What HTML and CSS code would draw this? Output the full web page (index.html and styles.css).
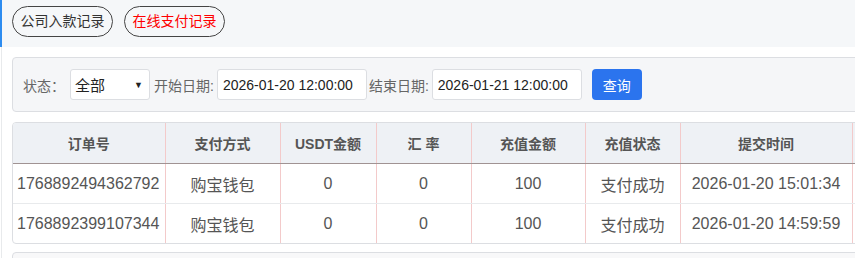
FILE: index.html
```html
<!DOCTYPE html>
<html lang="zh-CN">

<head>
    <meta charset="UTF-8">
    <meta name="viewport" content="width=device-width, initial-scale=1.0">
    <title>在线支付记录</title>
    <link rel="stylesheet" href="styles.css">
</head>

<body>
    <div class="tabbar">
        <a class="tab">公司入款记录</a>
        <a class="tab active">在线支付记录</a>
    </div>

    <div class="main">
        <!-- Search form -->
        <div class="search">
            <label class="lbl first">状态：</label>
            <div class="select"><span>全部</span><span class="arrow">&#9660;</span></div>
            <label class="lbl">开始日期:</label>
            <input class="date" type="text" value="2026-01-20 12:00:00">
            <label class="lbl">结束日期:</label>
            <input class="date" type="text" value="2026-01-21 12:00:00">
            <button class="btn">查询</button>
        </div>

        <!-- Records table -->
        <div class="grid">
            <table>
                <colgroup>
                    <col style="width:152px">
                    <col style="width:115px">
                    <col style="width:96px">
                    <col style="width:95px">
                    <col style="width:114px">
                    <col style="width:95px">
                    <col style="width:172px">
                    <col style="width:120px">
                </colgroup>
                <thead>
                    <tr>
                        <th>订单号</th>
                        <th>支付方式</th>
                        <th>USDT金额</th>
                        <th>汇 率</th>
                        <th>充值金额</th>
                        <th>充值状态</th>
                        <th>提交时间</th>
                        <th></th>
                    </tr>
                </thead>
                <tbody>
                    <tr>
                        <td>1768892494362792</td>
                        <td>购宝钱包</td>
                        <td>0</td>
                        <td>0</td>
                        <td>100</td>
                        <td>支付成功</td>
                        <td>2026-01-20 15:01:34</td>
                        <td></td>
                    </tr>
                    <tr>
                        <td>1768892399107344</td>
                        <td>购宝钱包</td>
                        <td>0</td>
                        <td>0</td>
                        <td>100</td>
                        <td>支付成功</td>
                        <td>2026-01-20 14:59:59</td>
                        <td></td>
                    </tr>
                </tbody>
            </table>
        </div>

        <div class="pager"></div>
    </div>
</body>

</html>
```

FILE: styles.css
```css
body {
    margin: 0;
    padding: 0;
    background-color: #ffffff;
    font-family: 'Liberation Sans', 'Noto Sans CJK SC', sans-serif;
    font-size: 14px;
    color: #555;
    overflow: hidden;
}

/* Top tabs */
.tabbar {
    height: 47px;
    box-sizing: border-box;
    background-color: #f5f7f9;
    border-left: 2px solid #2d8cf0;
    padding: 6px 0 0 10px;
    display: flex;
    gap: 11px;
}

.tab {
    display: block;
    width: 101px;
    height: 31px;
    box-sizing: border-box;
    border: 1px solid #444;
    border-radius: 16px;
    line-height: 29px;
    text-align: center;
    font-size: 14px;
    color: #333;
}

.tab.active {
    color: #ff0000;
}

.main {
    margin-left: 1px;
    border-left: 1px solid #e8eaec;
    padding: 10px 0 0 10px;
    width: 1100px;
}

/* Search form */
.search {
    display: flex;
    align-items: center;
    height: 55px;
    box-sizing: border-box;
    padding-left: 10px;
    background-color: #f5f6f8;
    border: 1px solid #dcdee2;
    border-radius: 4px;
}

.lbl {
    color: #666;
    font-size: 14px;
    margin-right: 3px;
}

.lbl.first {
    margin-right: 5px;
}

.select {
    width: 80px;
    height: 31px;
    box-sizing: border-box;
    background: #fff;
    border: 1px solid #dcdee2;
    border-radius: 3px;
    display: flex;
    align-items: center;
    justify-content: space-between;
    padding: 0 6px 0 4px;
    color: #222;
    font-size: 15px;
    margin-right: 4px;
}

.select .arrow {
    font-size: 9px;
    color: #222;
}

.date {
    width: 150px;
    height: 31px;
    box-sizing: border-box;
    border: 1px solid #dcdee2;
    border-radius: 3px;
    padding: 0 0 0 5px;
    font-family: 'Liberation Sans', sans-serif;
    font-size: 14px;
    color: #222;
    margin-right: 2px;
}

.btn {
    width: 50px;
    height: 31px;
    margin-left: 8px;
    border: none;
    border-radius: 4px;
    background-color: #2b74ee;
    color: #fff;
    font-family: 'Liberation Sans', 'Noto Sans CJK SC', sans-serif;
    font-size: 14px;
}

/* Table */
.grid {
    margin-top: 10px;
    border: 1px solid #dcdee2;
    border-radius: 4px;
    overflow: hidden;
    width: 960px;
}

table {
    border-collapse: collapse;
    table-layout: fixed;
}

th {
    height: 40px;
    padding: 0;
    background-color: #eef1f5;
    font-weight: bold;
    color: #555;
    font-size: 14px;
    border-left: 1px solid #f3caca;
    border-bottom: 1px solid #a09393;
}

td {
    height: 39px;
    padding: 0;
    text-align: center;
    font-size: 16px;
    color: #555;
    border-left: 1px solid #f3caca;
    border-bottom: 1px solid #e8eaec;
}

th:first-child,
td:first-child {
    border-left: none;
}

td:first-child {
    text-align: left;
    padding-left: 4px;
}

tbody tr:last-child td {
    border-bottom: none;
}

.pager {
    margin-top: 8px;
    height: 40px;
    border: 1px solid #dcdee2;
    border-radius: 4px;
    background-color: #f8f8f9;
}
```
